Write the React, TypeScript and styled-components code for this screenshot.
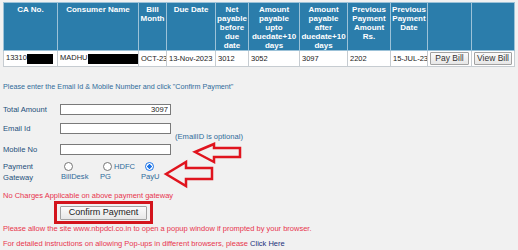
import React from 'react';
import styled, { createGlobalStyle } from 'styled-components';

const GlobalStyle = createGlobalStyle`
  html, body { margin: 0; padding: 0; background: #f1f1f1; }
  body { font-family: "Liberation Sans", Arial, sans-serif; }
`;

const Page = styled.div`
  position: relative;
  width: 518px;
  height: 250px;
  overflow: hidden;
  box-sizing: border-box;
  padding: 2px 4px 0 3px;
`;

const BillTable = styled.table`
  width: 511px;
  table-layout: fixed;
  border-collapse: collapse;
  background: #fff;
  border: 1px solid #b9c4cc;
`;

const Th = styled.th`
  background: #2b7dab;
  color: #fff;
  font-weight: bold;
  font-size: 8px;
  line-height: 9px;
  vertical-align: top;
  text-align: center;
  padding: 2px 1px 0;
  height: 45px;
  border: 1px solid #9cc2d8;
`;

const Td = styled.td`
  font-size: 7.5px;
  color: #222;
  padding: 0 1px 0 2px;
  height: 15px;
  border: 1px solid #c6ccd1;
  white-space: nowrap;
  overflow: hidden;
`;

const ButtonTd = styled(Td)`
  padding: 0 2px;
`;

const Masked = styled.span<{ $w: number }>`
  display: inline-block;
  width: ${p => p.$w}px;
  height: 10px;
  background: #000;
  vertical-align: middle;
`;

const GrayButton = styled.button`
  font-family: "Liberation Sans", Arial, sans-serif;
  font-size: 8.5px;
  color: #333;
  height: 13px;
  line-height: 11px;
  padding: 0;
  border: 1px solid #a2a2a2;
  border-radius: 1px;
  background: linear-gradient(#fbfbfb, #e7e7e7);
  width: 100%;
`;

const Intro = styled.div`
  margin-top: 15px;
  font-size: 7.2px;
  line-height: 10px;
  color: #2f6b9a;
`;

const Row = styled.div<{ $mt: number }>`
  display: flex;
  align-items: flex-start;
  margin-top: ${p => p.$mt}px;
`;

const Label = styled.div`
  width: 57px;
  font-size: 7.6px;
  line-height: 11px;
  color: #234f7a;
`;

const TextInput = styled.input<{ $right?: boolean }>`
  width: 111px;
  height: 11px;
  box-sizing: border-box;
  border: 1px solid #7a7a7a;
  background: #fff;
  font-family: "Liberation Sans", Arial, sans-serif;
  font-size: 7.6px;
  padding: 0 2px;
  text-align: ${p => (p.$right ? 'right' : 'left')};
  color: #222;
  outline: none;
`;

const Note = styled.span`
  font-size: 7.6px;
  line-height: 10px;
  color: #2f6b9a;
  margin: 9px 0 0 4px;
`;

const Options = styled.div`
  display: flex;
  margin-left: 1px;
`;

const Option = styled.div<{ $w: number }>`
  width: ${p => p.$w}px;
  font-size: 7.6px;
  color: #2f6b9a;
`;

const RadioLine = styled.div<{ $pl: number }>`
  display: flex;
  align-items: center;
  height: 11px;
  padding-left: ${p => p.$pl}px;
  gap: 2px;
`;

const OptionText = styled.div`
  line-height: 10px;
`;

const Radio = styled.input`
  appearance: none;
  margin: 0;
  width: 9px;
  height: 9px;
  border-radius: 50%;
  border: 1px solid #767676;
  background: #fff;
  box-sizing: border-box;
  &:checked {
    border-color: #1a73e8;
    background: radial-gradient(circle, #1a73e8 0 2px, #fff 2.3px);
  }
`;

const Warning = styled.div<{ $mt: number }>`
  font-size: 7.5px;
  line-height: 10px;
  color: #e8354e;
  margin-top: ${p => p.$mt}px;
  white-space: nowrap;
`;

const ConfirmFrame = styled.div`
  margin: 0 0 0 51px;
  width: 99px;
  height: 23px;
  box-sizing: border-box;
  border: 3px solid #d3141c;
  display: flex;
  align-items: center;
  justify-content: center;
`;

const ConfirmButton = styled(GrayButton)`
  width: 87px;
  height: 14px;
  font-size: 9px;
  color: #222;
`;

const Link = styled.a`
  color: #22307a;
  text-decoration: none;
`;

const Annotations = styled.svg`
  position: absolute;
  left: 0;
  top: 0;
  pointer-events: none;
`;

const headers = [
  'CA No.',
  'Consumer Name',
  'Bill Month',
  'Due Date',
  'Net payable before due date',
  'Amount payable upto duedate+10 days',
  'Amount payable after duedate+10 days',
  'Previous Payment Amount Rs.',
  'Previous Payment Date',
  '',
  '',
];

const widths = [54, 81, 28, 49, 33, 51, 48, 43, 37, 44, 43];

export default function App() {
  return (
    <>
      <GlobalStyle />
      <Page>
        <BillTable>
          <colgroup>
            {widths.map((w, i) => (
              <col key={i} style={{ width: w }} />
            ))}
          </colgroup>
          <thead>
            <tr>
              {headers.map((h, i) => (
                <Th key={i}>{h}</Th>
              ))}
            </tr>
          </thead>
          <tbody>
            <tr>
              <Td>
                13310<Masked $w={26} />
              </Td>
              <Td>
                MADHU<Masked $w={50} />
              </Td>
              <Td>OCT-23</Td>
              <Td>13-Nov-2023</Td>
              <Td>3012</Td>
              <Td>3052</Td>
              <Td>3097</Td>
              <Td>2202</Td>
              <Td>15-JUL-23</Td>
              <ButtonTd>
                <GrayButton>Pay Bill</GrayButton>
              </ButtonTd>
              <ButtonTd>
                <GrayButton>View Bill</GrayButton>
              </ButtonTd>
            </tr>
          </tbody>
        </BillTable>

        <Intro>Please enter the Email Id &amp; Mobile Number and click "Confirm Payment"</Intro>

        <Row $mt={12}>
          <Label>Total Amount</Label>
          <TextInput $right defaultValue="3097" />
        </Row>
        <Row $mt={8}>
          <Label>Email Id</Label>
          <TextInput />
          <Note>(EmailID is optional)</Note>
        </Row>
        <Row $mt={2}>
          <Label>Mobile No</Label>
          <TextInput />
        </Row>
        <Row $mt={6}>
          <Label>
            Payment
            <br />
            Gateway
          </Label>
          <Options>
            <Option $w={39}>
              <RadioLine $pl={3}>
                <Radio type="radio" name="pg" />
              </RadioLine>
              <OptionText>BillDesk</OptionText>
            </Option>
            <Option $w={41}>
              <RadioLine $pl={3}>
                <Radio type="radio" name="pg" />
                HDFC
              </RadioLine>
              <OptionText>PG</OptionText>
            </Option>
            <Option $w={40}>
              <RadioLine $pl={4}>
                <Radio type="radio" name="pg" defaultChecked />
              </RadioLine>
              <OptionText>PayU</OptionText>
            </Option>
          </Options>
        </Row>

        <Warning $mt={8}>No Charges Applicable on above payment gateway</Warning>
        <ConfirmFrame>
          <ConfirmButton>Confirm Payment</ConfirmButton>
        </ConfirmFrame>
        <Warning $mt={0}>
          Please allow the site www.nbpdcl.co.in to open a popup window if prompted by your browser.
        </Warning>
        <Warning $mt={5}>
          For detailed instructions on allowing Pop-ups in different browsers, please{' '}
          <Link href="#">Click Here</Link>
        </Warning>

        <Annotations width="518" height="250" viewBox="0 0 518 250">
          <path
            d="M195 152 L214 144 L214 148 L240 148 L240 157 L214 157 L214 162 Z"
            fill="none"
            stroke="#e0141e"
            strokeWidth="2.5"
            strokeLinejoin="miter"
          />
          <path
            d="M166 174 L186 162 L186 168 L212 168 L212 179 L186 179 L186 186 Z"
            fill="none"
            stroke="#e0141e"
            strokeWidth="2.5"
            strokeLinejoin="miter"
          />
        </Annotations>
      </Page>
    </>
  );
}
